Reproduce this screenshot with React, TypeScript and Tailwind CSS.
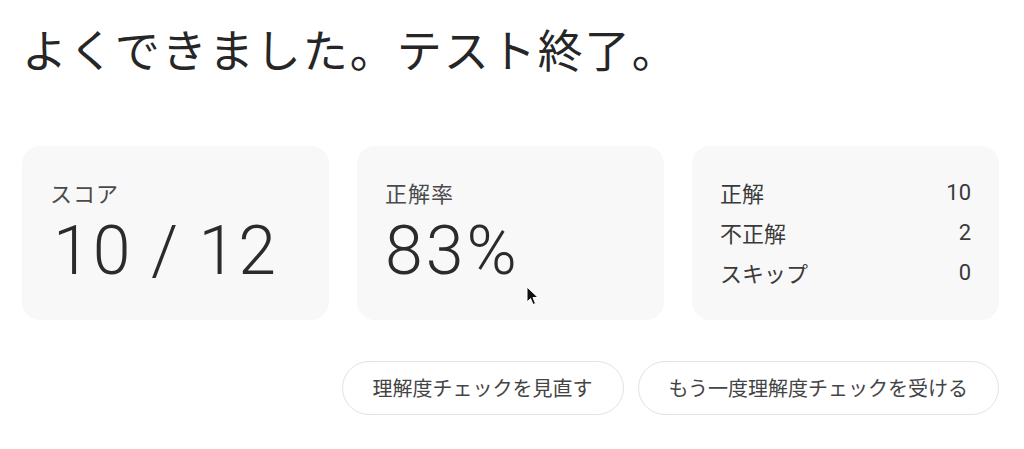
import React from "react";

const jp = { fontFamily: '"Noto Sans CJK JP", "Noto Sans", sans-serif' };
const num = { fontFamily: 'Roboto, "Noto Sans", sans-serif' };

const Card: React.FC<{ children: React.ReactNode; className?: string }> = ({ children, className = "" }) => (
  <div className={`h-[174px] rounded-[18px] bg-[#f8f8f8] px-[28px] ${className}`}>{children}</div>
);

const rows = [
  { label: "正解", value: "10" },
  { label: "不正解", value: "2" },
  { label: "スキップ", value: "0" },
];

const App: React.FC = () => {
  return (
    <div className="relative h-[449px] w-[1024px] overflow-hidden bg-white px-[22px] pt-[22px] text-[#2b2b2b]" style={jp}>
      <h1 className="text-[45px] leading-[54px] font-normal tracking-[2px] text-[#262626]">よくできました。テスト終了。</h1>

      <div className="mt-[70px] grid grid-cols-3 gap-[28px] pr-[3px]">
        <Card className="pt-[30px]">
          <div className="text-[22px] leading-[32px] tracking-[1px] text-[#4a4a4a]">スコア</div>
          <div className="mt-[3px] pl-[3px] text-[68px] leading-[80px] font-light tracking-[2px] text-[#2b2b2b]" style={num}>10 / 12</div>
        </Card>
        <Card className="pt-[30px]">
          <div className="text-[22px] leading-[32px] tracking-[1px] text-[#4a4a4a]">正解率</div>
          <div className="mt-[3px] text-[68px] leading-[80px] font-light tracking-[3px] text-[#2b2b2b]" style={num}>83%</div>
        </Card>
        <Card className="pt-[26px]">
          {rows.map((r) => (
            <div key={r.label} className="flex h-[40px] items-center justify-between text-[22px] text-[#3a3a3a]">
              <span>{r.label}</span>
              <span style={num}>{r.value}</span>
            </div>
          ))}
        </Card>
      </div>

      <div className="mt-[41px] flex justify-end gap-[14px] pr-[3px]">
        <button className="h-[54px] rounded-full border border-[#e3e3e3] bg-white px-[30px] text-[20px] text-[#444]">
          理解度チェックを見直す
        </button>
        <button className="h-[54px] rounded-full border border-[#e3e3e3] bg-white px-[30px] text-[20px] text-[#444]">
          もう一度理解度チェックを受ける
        </button>
      </div>

      <svg className="absolute left-[526px] top-[286px]" width="14" height="20" viewBox="0 0 14 20">
        <path d="M1 1 L1 16 L4.5 12.5 L7 18.5 L9.5 17.5 L7 11.5 L12 11.5 Z" fill="#111" stroke="#fff" strokeWidth="1" />
      </svg>
    </div>
  );
};

export default App;
